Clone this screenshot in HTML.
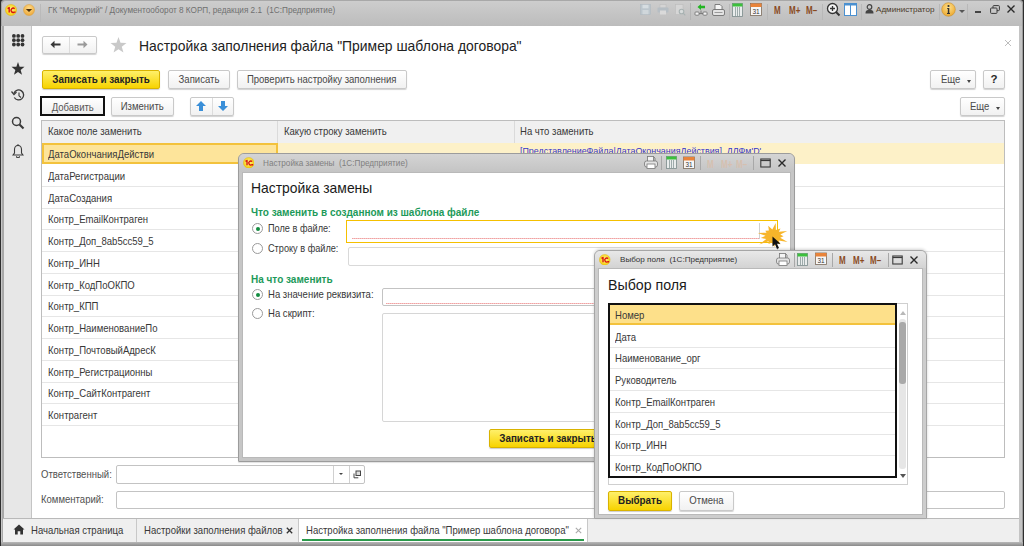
<!DOCTYPE html>
<html><head><meta charset="utf-8">
<style>
*{box-sizing:border-box;margin:0;padding:0}
html,body{width:1024px;height:546px;overflow:hidden;background:#4a4a4a;font-family:"Liberation Sans",sans-serif;color:#383838}
.a{position:absolute}
.t{position:absolute;white-space:nowrap;font-size:10.3px;line-height:14px;transform:scaleX(0.927);transform-origin:0 50%}
.btn{position:absolute;border:1px solid #c9c9c9;border-radius:2px;background:linear-gradient(#ffffff,#f1f1f1);box-shadow:0 1px 1px rgba(0,0,0,.18);font-size:9.6px;line-height:17px;text-align:center;color:#484848;white-space:nowrap}
.ybtn{position:absolute;border:1px solid #d9b300;border-radius:2px;background:linear-gradient(#fff06a,#f7d300);box-shadow:0 1px 1px rgba(0,0,0,.2);font-size:10px;font-weight:bold;line-height:17px;text-align:center;color:#222;white-space:nowrap}
.bt{display:inline-block;font-size:10.3px;transform:scaleX(0.927);transform-origin:50% 50%}
.ybtn .bt{font-size:10.3px;transform:scaleX(0.955)}
.inp{position:absolute;border:1px solid #c3c3c3;border-radius:2px;background:#fff}
.hl{position:absolute;height:1px;background:#e6e6e6}
.radio{position:absolute;width:11px;height:11px;border:1px solid #9a9a9a;border-radius:50%;background:#fff}
.radio.on::after{content:"";position:absolute;left:2.5px;top:2.5px;width:4px;height:4px;border-radius:50%;background:#128c40}
.green{position:absolute;white-space:nowrap;font-size:10px;font-weight:bold;color:#1d9a5a;line-height:12px}
</style></head>
<body>
<!-- outer window -->
<div class="a" style="left:0;top:0;width:1024px;height:546px;background:#2e2e2e"></div>
<div class="a" style="left:1px;top:0;width:1022px;height:546px;background:#a8a8a8;border-radius:3px 3px 0 0"></div>
<div class="a" style="left:1019px;top:4px;width:4px;height:542px;background:linear-gradient(90deg,#c4c4c4 0 3px,#9c9c9c 3px)"></div>
<!-- title bar -->
<div class="a" style="left:2px;top:1px;width:1020px;height:25px;background:linear-gradient(#cdcdcd,#bcbcbc);border-radius:4px 4px 0 0"></div>
<!-- sidebar -->
<div class="a" style="left:1px;top:26px;width:1px;height:516px;background:#c6c6c6"></div>
<div class="a" style="left:4px;top:26px;width:27px;height:492px;background:#e7e7e7"></div>
<div class="a" style="left:31px;top:26px;width:1px;height:492px;background:#c4c4c4"></div>
<!-- content -->
<div class="a" style="left:32px;top:26px;width:987px;height:492px;background:#fff"></div>
<div class="a" style="left:1019px;top:26px;width:3px;height:516px;background:#c4c4c4"></div>
<!-- tab bar -->
<div class="a" style="left:3px;top:518px;width:1016px;height:1px;background:#b9b9b9"></div>
<div class="a" style="left:3px;top:519px;width:1016px;height:23px;background:#efefef"></div>
<div class="a" style="left:1px;top:542px;width:1022px;height:4px;background:linear-gradient(#b8b8b8,#8a8a8a)"></div>
<!-- TITLE BAR CONTENT -->
<svg class="a" style="left:5px;top:3.5px" width="12" height="12" viewBox="0 0 12 12"><defs><radialGradient id="lgm" cx="50%" cy="45%" r="60%"><stop offset="0" stop-color="#fff68a"/><stop offset="1" stop-color="#f3c800"/></radialGradient></defs><circle cx="6" cy="6" r="5.6" fill="url(#lgm)" stroke="#e3b400" stroke-width="0.4"/><path d="M2.6 4.6L4.2 3.6V8.6" fill="none" stroke="#d81010" stroke-width="1.4" stroke-linejoin="round"/><path d="M9.6 4.8A2.1 2.1 0 1 0 9.2 8.1H10.6" fill="none" stroke="#d81010" stroke-width="1.4"/></svg>
<svg class="a" style="left:22.5px;top:3.5px" width="12" height="12" viewBox="0 0 12 12"><defs><radialGradient id="dd" cx="50%" cy="35%" r="65%"><stop offset="0" stop-color="#ffdc8a"/><stop offset="1" stop-color="#eda83a"/></radialGradient></defs><circle cx="6" cy="6" r="5.5" fill="url(#dd)" stroke="#d9a040" stroke-width="0.5"/><path d="M2.8 4.9H9.2L6 7.9Z" fill="#4a3010"/></svg>
<div class="a" style="left:40px;top:4px;width:1px;height:18px;background:#bababa"></div>
<div class="t" style="left:48px;top:5px;font-size:8.2px;line-height:11px;color:#707070;transform:none">ГК "Меркурий" / Документооборот 8 КОРП, редакция 2.1&nbsp; (1С:Предприятие)</div>
<svg class="a" style="left:640px;top:4px" width="11" height="11" viewBox="0 0 11 11"><rect x="0.5" y="0.5" width="10" height="10" fill="#bcc6cd" stroke="#b0bac0" stroke-width="0.6"/><rect x="2.5" y="0.8" width="6" height="3.5" fill="#d6dde1"/><rect x="2.5" y="6" width="6" height="4.2" fill="#d0d7db"/></svg>
<svg class="a" style="left:657px;top:4px" width="12" height="11" viewBox="0 0 12 11"><rect x="3" y="0.5" width="6" height="3.5" fill="#d4d4d4" stroke="#bcbcbc" stroke-width="0.5"/><rect x="0.5" y="3.5" width="11" height="5" rx="1" fill="#b6bec4"/><rect x="3" y="6.5" width="6" height="4" fill="#dadada"/></svg>
<svg class="a" style="left:675px;top:4px" width="11" height="12" viewBox="0 0 11 12"><rect x="0.5" y="0.5" width="7.5" height="10" fill="#d6d6d6" stroke="#bdbdbd" stroke-width="0.6"/><circle cx="6.5" cy="7.5" r="2.3" fill="#d8dcdc" stroke="#a8b2b2" stroke-width="1.1"/><path d="M8.2 9.2L10.3 11.3" stroke="#a8b2b2" stroke-width="1.2"/></svg>
<div class="a" style="left:690px;top:3px;width:1px;height:17px;background:#b4b4b4"></div>
<svg class="a" style="left:694px;top:3px" width="14" height="13" viewBox="0 0 14 13"><path d="M3.5 4L7 1V2.7H11V5.3H7V7Z" fill="#22b522"/><rect x="1" y="9" width="4" height="3.2" rx="0.8" fill="#f2f2f2" stroke="#6a6a6a" stroke-width="0.8"/><rect x="9" y="9" width="4" height="3.2" rx="0.8" fill="#f2f2f2" stroke="#6a6a6a" stroke-width="0.8"/><path d="M5 10.6H9M7 7.5V10.6" stroke="#6a6a6a" stroke-width="0.8"/></svg>
<svg class="a" style="left:712px;top:4px" width="13" height="12" viewBox="0 0 13 12"><path d="M3 0.5H8L10 2.5V6H3Z" fill="#f6f6f6" stroke="#666" stroke-width="0.8"/><rect x="0.5" y="5.5" width="12" height="6" rx="1.5" fill="#e4e4e4" stroke="#666" stroke-width="0.8"/><path d="M2.5 8.5H10.5" stroke="#888" stroke-width="0.8"/></svg>
<div class="a" style="left:729px;top:4px;width:1px;height:16px;background:#b8b8b8"></div>
<svg class="a" style="left:732px;top:3px" width="11" height="14" viewBox="0 0 11 14"><rect x="0.5" y="0.5" width="10" height="13" fill="#e9ecec" stroke="#7a8a8a" stroke-width="0.8"/><rect x="0.5" y="0.5" width="10" height="3" fill="#3cc03c"/><path d="M3.5 4V13M5.5 4V13M7.5 4V13" stroke="#8a9a9a" stroke-width="0.8"/></svg>
<svg class="a" style="left:750px;top:2px" width="12" height="14" viewBox="0 0 12 14"><rect x="0.5" y="1.5" width="11" height="12" fill="#f7f7f7" stroke="#7a6a5a" stroke-width="0.8"/><rect x="0.5" y="1.5" width="11" height="3.5" fill="#e9843a"/><text x="6" y="12" text-anchor="middle" font-family="Liberation Sans" font-size="6.5" fill="#333">31</text></svg>
<div class="a" style="left:767px;top:4px;width:1px;height:16px;background:#b8b8b8"></div>
<div class="t" style="left:773.9px;top:5px;font-size:10px;font-weight:bold;color:#8a4a1e;transform:scaleX(0.8);line-height:12px">M</div>
<div class="t" style="left:788.5px;top:5px;font-size:10px;font-weight:bold;color:#8a4a1e;transform:scaleX(0.8);line-height:12px">M+</div>
<div class="t" style="left:805.6px;top:5px;font-size:10px;font-weight:bold;color:#8a4a1e;transform:scaleX(0.8);line-height:12px">M−</div>
<div class="a" style="left:822px;top:4px;width:1px;height:16px;background:#b8b8b8"></div>
<svg class="a" style="left:826px;top:2px" width="15" height="15" viewBox="0 0 15 15"><circle cx="6.5" cy="6.5" r="5" fill="#f4f4f4" stroke="#333" stroke-width="1.3"/><path d="M4 6.5H9M6.5 4V9" stroke="#333" stroke-width="1.3"/><path d="M10 10L13.5 13.5" stroke="#333" stroke-width="2"/></svg>
<svg class="a" style="left:844px;top:3px" width="13" height="13" viewBox="0 0 13 13"><rect x="0.5" y="0.5" width="12" height="12" fill="#fff" stroke="#4a90d0" stroke-width="1"/><rect x="0.5" y="0.5" width="12" height="2" fill="#4a90d0"/><path d="M6.5 2V12.5" stroke="#4a90d0" stroke-width="1"/></svg>
<div class="a" style="left:861px;top:4px;width:1px;height:16px;background:#b8b8b8"></div>
<svg class="a" style="left:865px;top:4px" width="9" height="10" viewBox="0 0 9 10"><circle cx="4.5" cy="3" r="2.3" fill="none" stroke="#444" stroke-width="1.2"/><path d="M0.5 9.5C0.5 6.5 2 5.8 4.5 5.8S8.5 6.5 8.5 9.5Z" fill="#444"/></svg>
<div class="t" style="left:876px;top:4px;font-size:8.1px;line-height:11px;color:#4a3a2a;transform:none">Администратор</div>
<div class="a" style="left:939px;top:4px;width:1px;height:16px;background:#b8b8b8"></div>
<svg class="a" style="left:941px;top:2px" width="15" height="15" viewBox="0 0 15 15"><defs><radialGradient id="inf" cx="50%" cy="35%" r="65%"><stop offset="0" stop-color="#ffe08a"/><stop offset="1" stop-color="#eba830"/></radialGradient></defs><circle cx="7.5" cy="7.5" r="6.8" fill="url(#inf)" stroke="#c89030" stroke-width="0.6"/><circle cx="7.5" cy="4" r="1.1" fill="#333"/><path d="M6.2 6H8.3V11H9V12H6V11H6.8V7H6.2Z" fill="#333"/></svg>
<div class="a" style="left:959px;top:10px;width:0;height:0;border-left:3px solid transparent;border-right:3px solid transparent;border-top:3px solid #555"></div>
<div class="a" style="left:967px;top:4px;width:1px;height:16px;background:#b8b8b8"></div>
<div class="a" style="left:975px;top:11px;width:6px;height:1.5px;background:#444"></div>
<svg class="a" style="left:990px;top:5px" width="10" height="9" viewBox="0 0 10 9"><rect x="3" y="0.6" width="6.4" height="5" rx="0.8" fill="none" stroke="#3a3a3a" stroke-width="1"/><rect x="0.6" y="3" width="6.4" height="5.4" rx="0.8" fill="#c8c8c8" stroke="#3a3a3a" stroke-width="1"/></svg>
<svg class="a" style="left:1006px;top:4px" width="10" height="10" viewBox="0 0 10 10"><path d="M1.5 1.5L8.5 8.5M8.5 1.5L1.5 8.5" stroke="#2a2a2a" stroke-width="1.4"/></svg>

<!-- SIDEBAR ICONS -->
<svg class="a" style="left:11.5px;top:33.5px" width="13" height="13" viewBox="0 0 13 13"><circle cx="1.9" cy="1.9" r="1.9" fill="#333"/><circle cx="6.2" cy="1.9" r="1.9" fill="#333"/><circle cx="10.5" cy="1.9" r="1.9" fill="#333"/><circle cx="1.9" cy="6.2" r="1.9" fill="#333"/><circle cx="6.2" cy="6.2" r="1.9" fill="#333"/><circle cx="10.5" cy="6.2" r="1.9" fill="#333"/><circle cx="1.9" cy="10.5" r="1.9" fill="#333"/><circle cx="6.2" cy="10.5" r="1.9" fill="#333"/><circle cx="10.5" cy="10.5" r="1.9" fill="#333"/></svg>
<svg class="a" style="left:11px;top:62px" width="14" height="13" viewBox="0 0 24 23"><path d="M12 0L14.9 8.3L23.5 8.6L16.7 14L19.1 22.4L12 17.5L4.9 22.4L7.3 14L0.5 8.6L9.1 8.3Z" fill="#333"/></svg>
<svg class="a" style="left:11px;top:89px" width="14" height="13" viewBox="0 0 14 13"><path d="M3.3 8.5A5 5 0 1 0 3 4" fill="none" stroke="#3a3a3a" stroke-width="1.3"/><path d="M0.5 2.5L3 5.5L5.5 3" fill="none" stroke="#3a3a3a" stroke-width="1.2"/><path d="M8 3.5V6.8L10 8.5" fill="none" stroke="#3a3a3a" stroke-width="1.1"/></svg>
<svg class="a" style="left:11px;top:116px" width="14" height="14" viewBox="0 0 14 14"><circle cx="5.5" cy="5.5" r="4" fill="none" stroke="#3a3a3a" stroke-width="1.5"/><path d="M8.5 8.5L12.5 12.5" stroke="#3a3a3a" stroke-width="2.2"/></svg>
<svg class="a" style="left:12px;top:144px" width="12" height="14" viewBox="0 0 12 14"><path d="M6 1.5C3.5 1.5 2.5 3.5 2.5 5.5V9L1 11H11L9.5 9V5.5C9.5 3.5 8.5 1.5 6 1.5Z" fill="none" stroke="#3a3a3a" stroke-width="1.1"/><path d="M4.5 12.3A1.5 1.5 0 0 0 7.5 12.3" fill="none" stroke="#3a3a3a" stroke-width="1.1"/><circle cx="6" cy="1" r="0.8" fill="#333"/></svg>

<!-- MAIN FORM -->
<div class="btn" style="left:42px;top:36px;width:55px;height:18px"></div>
<div class="a" style="left:69px;top:37px;width:1px;height:16px;background:#dcdcdc"></div>
<svg class="a" style="left:50px;top:40px" width="11" height="9" viewBox="0 0 11 9"><path d="M0.5 4.5L4.5 0.8V3.4H10.5V5.6H4.5V8.2Z" fill="#383838"/></svg>
<svg class="a" style="left:77px;top:40px" width="11" height="9" viewBox="0 0 11 9"><path d="M10.5 4.5L6.5 0.8V3.4H0.5V5.6H6.5V8.2Z" fill="#9a9a9a"/></svg>
<svg class="a" style="left:110px;top:37px" width="17" height="16" viewBox="0 0 24 23"><path d="M12 0L14.9 8.3L23.5 8.6L16.7 14L19.1 22.4L12 17.5L4.9 22.4L7.3 14L0.5 8.6L9.1 8.3Z" fill="#c9c9c9"/></svg>
<div class="t" style="left:139px;top:37px;font-size:13.9px;line-height:18px;color:#222;transform:none">Настройка заполнения файла "Пример шаблона договора"</div>
<svg class="a" style="left:1003.5px;top:38.5px" width="8" height="8" viewBox="0 0 8 8"><path d="M1 1L7 7M7 1L1 7" stroke="#bdbdbd" stroke-width="1"/></svg>
<div class="ybtn" style="left:42px;top:70px;width:118px;height:19px"><span class="bt">Записать и закрыть</span></div>
<div class="btn" style="left:168px;top:70px;width:62px;height:19px"><span class="bt">Записать</span></div>
<div class="btn" style="left:237px;top:70px;width:170px;height:19px"><span class="bt">Проверить настройку заполнения</span></div>
<div class="btn" style="left:930px;top:70px;width:46px;height:19px"></div><div class="t" style="left:941px;top:73px;color:#4a4a4a">Еще</div><div class="a" style="left:967px;top:80px;width:0;height:0;border-left:2.5px solid transparent;border-right:2.5px solid transparent;border-top:3px solid #444"></div>
<div class="btn" style="left:983px;top:70px;width:22px;height:19px;font-weight:bold;font-size:11.5px;color:#2a2a2a">?</div>
<div class="a" style="left:40px;top:96px;width:65px;height:20px;border:2px solid #111"></div>
<div class="a" style="left:42px;top:98px;width:61px;height:16px;background:linear-gradient(#ffffff,#eeeeee)"></div><div class="a" style="left:42px;top:98px;width:61px;height:16px;line-height:16px;text-align:center;color:#555"><span class="bt">Добавить</span></div>
<div class="btn" style="left:111px;top:97px;width:63px;height:19px"><span class="bt">Изменить</span></div>
<div class="btn" style="left:190px;top:97px;width:44px;height:19px"></div>
<div class="a" style="left:212px;top:98px;width:1px;height:17px;background:#dcdcdc"></div>
<svg class="a" style="left:195px;top:100px" width="12" height="12" viewBox="0 0 12 12"><path d="M6 1L11 6H8V11H4V6H1Z" fill="#3a8fd8"/></svg>
<svg class="a" style="left:217px;top:100px" width="12" height="12" viewBox="0 0 12 12"><path d="M6 11L11 6H8V1H4V6H1Z" fill="#3a8fd8"/></svg>
<div class="btn" style="left:960px;top:97px;width:45px;height:19px"></div><div class="t" style="left:970px;top:100px;color:#4a4a4a">Еще</div><div class="a" style="left:996px;top:107px;width:0;height:0;border-left:2.5px solid transparent;border-right:2.5px solid transparent;border-top:3px solid #444"></div>
<div class="a" style="left:41px;top:120px;width:964px;height:338px;border:1px solid #bdbdbd;background:#fff"></div>
<div class="a" style="left:42px;top:121px;width:962px;height:22px;background:#f0f0f0"></div>
<div class="a" style="left:277px;top:121px;width:1px;height:22px;background:#dadada"></div>
<div class="a" style="left:514px;top:121px;width:1px;height:22px;background:#dadada"></div>
<div class="t" style="left:48px;top:125px">Какое поле заменить</div>
<div class="t" style="left:284px;top:125px">Какую строку заменить</div>
<div class="t" style="left:520px;top:125px">На что заменить</div>
<div class="a" style="left:42px;top:143px;width:962px;height:21px;background:#fdf1c8"></div>
<div class="a" style="left:42px;top:143px;width:236px;height:21px;background:#fde49a;border:2px solid #f3c23c"></div>
<div class="t" style="left:520px;top:144px;color:#3636c8;font-size:9.6px">[ПредставлениеФайла|ДатаОкончанияДействия], ДЛФм'D'</div>
<div class="t" style="left:48px;top:148.0px">ДатаОкончанияДействи</div>
<div class="t" style="left:48px;top:169.8px">ДатаРегистрации</div>
<div class="hl" style="left:42px;top:185.8px;width:962px"></div>
<div class="t" style="left:48px;top:191.5px">ДатаСоздания</div>
<div class="hl" style="left:42px;top:207.5px;width:962px"></div>
<div class="t" style="left:48px;top:213.2px">Контр_EmailКонтраген</div>
<div class="hl" style="left:42px;top:229.2px;width:962px"></div>
<div class="t" style="left:48px;top:235.0px">Контр_Доп_8ab5cc59_5</div>
<div class="hl" style="left:42px;top:251.0px;width:962px"></div>
<div class="t" style="left:48px;top:256.8px">Контр_ИНН</div>
<div class="hl" style="left:42px;top:272.8px;width:962px"></div>
<div class="t" style="left:48px;top:278.5px">Контр_КодПоОКПО</div>
<div class="hl" style="left:42px;top:294.5px;width:962px"></div>
<div class="t" style="left:48px;top:300.2px">Контр_КПП</div>
<div class="hl" style="left:42px;top:316.2px;width:962px"></div>
<div class="t" style="left:48px;top:322.0px">Контр_НаименованиеПо</div>
<div class="hl" style="left:42px;top:338.0px;width:962px"></div>
<div class="t" style="left:48px;top:343.8px">Контр_ПочтовыйАдресК</div>
<div class="hl" style="left:42px;top:359.8px;width:962px"></div>
<div class="t" style="left:48px;top:365.5px">Контр_Регистрационны</div>
<div class="hl" style="left:42px;top:381.5px;width:962px"></div>
<div class="t" style="left:48px;top:387.2px">Контр_СайтКонтрагент</div>
<div class="hl" style="left:42px;top:403.2px;width:962px"></div>
<div class="t" style="left:48px;top:409.0px">Контрагент</div>
<div class="hl" style="left:42px;top:425.0px;width:962px"></div>
<div class="t" style="left:41px;top:468px;color:#505050">Ответственный:</div>
<div class="inp" style="left:116px;top:465px;width:249px;height:19px"></div>
<div class="a" style="left:333px;top:466px;width:1px;height:17px;background:#d0d0d0"></div>
<div class="a" style="left:348.5px;top:466px;width:1px;height:17px;background:#d0d0d0"></div>
<div class="a" style="left:338.5px;top:473px;width:0;height:0;border-left:2.5px solid transparent;border-right:2.5px solid transparent;border-top:2.5px solid #444"></div>
<svg class="a" style="left:353px;top:470px" width="9" height="9" viewBox="0 0 9 9"><path d="M1 3.5V7.8H5.3" fill="none" stroke="#444" stroke-width="1"/><rect x="3" y="1" width="4.5" height="4.5" fill="#ddd" stroke="#444" stroke-width="1"/></svg>
<div class="t" style="left:41px;top:493px;color:#505050">Комментарий:</div>
<div class="inp" style="left:116px;top:491px;width:889px;height:18px"></div>

<!-- TAB BAR -->
<svg class="a" style="left:13px;top:524px" width="12" height="11" viewBox="0 0 12 11"><path d="M6 0.5L11.5 5.5H10V10.5H7.3V7.3H4.7V10.5H2V5.5H0.5Z" fill="#333"/></svg>
<div class="t" style="left:31px;top:524px;font-size:10.3px">Начальная страница</div>
<div class="a" style="left:136px;top:519px;width:1px;height:23px;background:#c8c8c8"></div>
<div class="t" style="left:144px;top:524px;font-size:10.3px">Настройки заполнения файлов</div>
<svg class="a" style="left:286px;top:527px" width="7" height="7" viewBox="0 0 7 7"><path d="M0.8 0.8L6.2 6.2M6.2 0.8L0.8 6.2" stroke="#333" stroke-width="1.3"/></svg>
<div class="a" style="left:298px;top:519px;width:1px;height:23px;background:#c8c8c8"></div>
<div class="a" style="left:299px;top:519px;width:288px;height:23px;background:#fff"></div>
<div class="t" style="left:306px;top:524px;font-size:10.3px">Настройка заполнения файла "Пример шаблона договора"</div>
<svg class="a" style="left:575px;top:527px" width="7" height="7" viewBox="0 0 7 7"><path d="M0.8 0.8L6.2 6.2M6.2 0.8L0.8 6.2" stroke="#aaa" stroke-width="1.1"/></svg>
<div class="a" style="left:302px;top:539px;width:282px;height:2px;background:#2a9a4a"></div>
<div class="a" style="left:587px;top:519px;width:1px;height:23px;background:#c8c8c8"></div>

<!-- DIALOG 1 -->
<div class="a" style="left:238px;top:153px;width:557px;height:309px;border:1px solid #9c9c9c;border-radius:6px 6px 1px 1px;background:#c6c6c6;box-shadow:0 1px 1px rgba(0,0,0,.12)"></div>
<div class="a" style="left:239px;top:154px;width:555px;height:18px;border-radius:5px 5px 0 0;background:linear-gradient(#d4d4d4,#c4c4c4)"></div>
<div class="a" style="left:242px;top:172px;width:549px;height:286px;background:#fff;border:1px solid #b9b9b9"></div>
<svg class="a" style="left:242.75px;top:156.75px" width="11.5" height="11.5" viewBox="0 0 12 12"><defs><radialGradient id="lgd1" cx="50%" cy="45%" r="60%"><stop offset="0" stop-color="#fff68a"/><stop offset="1" stop-color="#f3c800"/></radialGradient></defs><circle cx="6" cy="6" r="5.6" fill="url(#lgd1)" stroke="#e3b400" stroke-width="0.4"/><path d="M2.6 4.6L4.2 3.6V8.6" fill="none" stroke="#d81010" stroke-width="1.4" stroke-linejoin="round"/><path d="M9.6 4.8A2.1 2.1 0 1 0 9.2 8.1H10.6" fill="none" stroke="#d81010" stroke-width="1.4"/></svg>
<div class="t" style="left:263px;top:158px;font-size:8.2px;line-height:11px;color:#808080;transform:none">Настройка замены&nbsp; (1С:Предприятие)</div>
<svg class="a" style="left:644px;top:156px" width="14" height="13" viewBox="0 0 14 13"><rect x="3.5" y="0.5" width="6" height="5" fill="#f4f4f4" stroke="#777" stroke-width="0.8"/><path d="M9.5 0.5L11 2V5" fill="none" stroke="#777" stroke-width="0.8"/><rect x="0.5" y="5" width="13" height="6" rx="2" fill="#e4e4e4" stroke="#777" stroke-width="0.8"/><rect x="3" y="8" width="8" height="4.5" fill="#fff" stroke="#777" stroke-width="0.8"/></svg>
<div class="a" style="left:661px;top:156px;width:1px;height:14px;background:#a8a8a8"></div>
<svg class="a" style="left:666px;top:156px" width="11" height="13" viewBox="0 0 11 13"><rect x="0.5" y="0.5" width="10" height="12" fill="#e9ecec" stroke="#7a8a8a" stroke-width="0.8"/><rect x="0.5" y="0.5" width="10" height="3" fill="#3cc03c"/><path d="M3.5 4V12M5.5 4V12M7.5 4V12" stroke="#8a9a9a" stroke-width="0.8"/></svg>
<svg class="a" style="left:683px;top:156px" width="12" height="13" viewBox="0 0 12 13"><rect x="0.5" y="1" width="11" height="11.5" fill="#f7f7f7" stroke="#7a6a5a" stroke-width="0.8"/><rect x="0.5" y="1" width="11" height="3.5" fill="#e9843a"/><text x="6" y="11.3" text-anchor="middle" font-family="Liberation Sans" font-size="6.3" fill="#333">31</text></svg>
<div class="a" style="left:700px;top:156px;width:1px;height:14px;background:#a8a8a8"></div>
<div class="t" style="left:706.5px;top:158.5px;font-size:10px;font-weight:bold;color:#d6c0b0;transform:scaleX(0.8);line-height:12px">M</div>
<div class="t" style="left:721px;top:158.5px;font-size:10px;font-weight:bold;color:#d6c0b0;transform:scaleX(0.8);line-height:12px">M+</div>
<div class="t" style="left:735.5px;top:158.5px;font-size:10px;font-weight:bold;color:#d6c0b0;transform:scaleX(0.8);line-height:12px">M−</div>
<div class="a" style="left:753px;top:156px;width:1px;height:14px;background:#a8a8a8"></div>
<svg class="a" style="left:760px;top:158px" width="11" height="10" viewBox="0 0 11 10"><rect x="0.8" y="1" width="9.4" height="8" fill="none" stroke="#3a3a3a" stroke-width="1.1"/><path d="M0.8 2.5H10.2" stroke="#3a3a3a" stroke-width="1.2"/></svg>
<svg class="a" style="left:777px;top:158px" width="10" height="10" viewBox="0 0 10 10"><path d="M1.5 1.5L8.5 8.5M8.5 1.5L1.5 8.5" stroke="#2a2a2a" stroke-width="1.4"/></svg>
<div class="t" style="left:251px;top:180px;font-size:13.9px;line-height:17px;color:#1a1a1a;transform:none">Настройка замены</div>
<div class="green" style="left:251px;top:207px">Что заменить в созданном из шаблона файле</div>
<div class="radio on" style="left:252px;top:223px"></div>
<div class="t" style="left:268px;top:222px;font-size:10.3px;transform:scaleX(0.89)">Поле в файле:</div>
<div class="a" style="left:346px;top:220px;width:432px;height:22.5px;border:1.6px solid #f5c000;background:#fff"></div>
<div class="a" style="left:352px;top:238px;width:408px;height:1px;background:repeating-linear-gradient(90deg,#f0a2a2 0 1px,#f6c4c4 1px 2px)"></div>
<div class="a" style="left:759px;top:223px;width:1px;height:16px;background:#d0d0d0"></div>
<div class="radio" style="left:252px;top:243px"></div>
<div class="t" style="left:268px;top:242px;font-size:10.3px;transform:scaleX(0.89)">Строку в файле:</div>
<div class="inp" style="left:348px;top:247px;width:430px;height:19px;border-color:#d9d9d9"></div>
<div class="green" style="left:251px;top:274px">На что заменить</div>
<div class="radio on" style="left:252px;top:289px"></div>
<div class="t" style="left:268px;top:288px;font-size:10.3px">На значение реквизита:</div>
<div class="inp" style="left:382px;top:288px;width:396px;height:18px"></div>
<div class="a" style="left:386px;top:303px;width:380px;height:0;height:1px;background:repeating-linear-gradient(90deg,#f0a2a2 0 1px,#f6c4c4 1px 2px)"></div>
<div class="radio" style="left:252px;top:308px"></div>
<div class="t" style="left:268px;top:307px;font-size:10.3px">На скрипт:</div>
<div class="inp" style="left:382px;top:313px;width:396px;height:109px;border-color:#d6d6d6"></div>
<div class="ybtn" style="left:489px;top:429px;width:118px;height:19px"><span class="bt">Записать и закрыть</span></div>
<div class="a" style="left:594px;top:250px;width:333px;height:269px;border:1px solid #a6a6a6;border-radius:6px 6px 1px 1px;background:#cdcdcd;box-shadow:0 -1px 3px rgba(0,0,0,.18)"></div>
<div class="a" style="left:595px;top:251px;width:331px;height:17px;border-radius:5px 5px 0 0;background:linear-gradient(#e8e8e8,#d3d3d3)"></div>
<div class="a" style="left:598px;top:268px;width:325px;height:247px;background:#fff;border:1px solid #b9b9b9"></div>
<svg class="a" style="left:599.25px;top:253.75px" width="11.5" height="11.5" viewBox="0 0 12 12"><defs><radialGradient id="lgd2" cx="50%" cy="45%" r="60%"><stop offset="0" stop-color="#fff68a"/><stop offset="1" stop-color="#f3c800"/></radialGradient></defs><circle cx="6" cy="6" r="5.6" fill="url(#lgd2)" stroke="#e3b400" stroke-width="0.4"/><path d="M2.6 4.6L4.2 3.6V8.6" fill="none" stroke="#d81010" stroke-width="1.4" stroke-linejoin="round"/><path d="M9.6 4.8A2.1 2.1 0 1 0 9.2 8.1H10.6" fill="none" stroke="#d81010" stroke-width="1.4"/></svg>
<div class="t" style="left:620px;top:254px;font-size:8.1px;line-height:11px;color:#333;transform:none">Выбор поля&nbsp; (1С:Предприятие)</div>
<svg class="a" style="left:776px;top:253px" width="14" height="13" viewBox="0 0 14 13"><rect x="3.5" y="0.5" width="6" height="5" fill="#f4f4f4" stroke="#777" stroke-width="0.8"/><path d="M9.5 0.5L11 2V5" fill="none" stroke="#777" stroke-width="0.8"/><rect x="0.5" y="5" width="13" height="6" rx="2" fill="#e4e4e4" stroke="#777" stroke-width="0.8"/><rect x="3" y="8" width="8" height="4.5" fill="#fff" stroke="#777" stroke-width="0.8"/></svg>
<div class="a" style="left:794px;top:253px;width:1px;height:14px;background:#a8a8a8"></div>
<svg class="a" style="left:797px;top:253px" width="11" height="13" viewBox="0 0 11 13"><rect x="0.5" y="0.5" width="10" height="12" fill="#e9ecec" stroke="#7a8a8a" stroke-width="0.8"/><rect x="0.5" y="0.5" width="10" height="3" fill="#3cc03c"/><path d="M3.5 4V12M5.5 4V12M7.5 4V12" stroke="#8a9a9a" stroke-width="0.8"/></svg>
<svg class="a" style="left:815px;top:252px" width="12" height="13" viewBox="0 0 12 13"><rect x="0.5" y="1" width="11" height="11.5" fill="#f7f7f7" stroke="#7a6a5a" stroke-width="0.8"/><rect x="0.5" y="1" width="11" height="3.5" fill="#e9843a"/><text x="6" y="11.3" text-anchor="middle" font-family="Liberation Sans" font-size="6.3" fill="#333">31</text></svg>
<div class="a" style="left:832px;top:253px;width:1px;height:14px;background:#a8a8a8"></div>
<div class="t" style="left:838.8px;top:255px;font-size:10px;font-weight:bold;color:#8a4a1e;transform:scaleX(0.8);line-height:12px">M</div>
<div class="t" style="left:852.8px;top:255px;font-size:10px;font-weight:bold;color:#8a4a1e;transform:scaleX(0.8);line-height:12px">M+</div>
<div class="t" style="left:869.8px;top:255px;font-size:10px;font-weight:bold;color:#8a4a1e;transform:scaleX(0.8);line-height:12px">M−</div>
<div class="a" style="left:888px;top:253px;width:1px;height:14px;background:#a8a8a8"></div>
<svg class="a" style="left:892px;top:255px" width="11" height="10" viewBox="0 0 11 10"><rect x="0.8" y="1" width="9.4" height="8" fill="none" stroke="#3a3a3a" stroke-width="1.1"/><path d="M0.8 2.5H10.2" stroke="#3a3a3a" stroke-width="1.2"/></svg>
<svg class="a" style="left:909px;top:255px" width="10" height="10" viewBox="0 0 10 10"><path d="M1.5 1.5L8.5 8.5M8.5 1.5L1.5 8.5" stroke="#2a2a2a" stroke-width="1.4"/></svg>
<div class="t" style="left:608px;top:276.5px;font-size:14.2px;line-height:17px;color:#1a1a1a;transform:none">Выбор поля</div>
<div class="a" style="left:608px;top:303px;width:300px;height:182px;border:1px solid #cfcfcf;background:#fff"></div>
<div class="a" style="left:610px;top:305px;width:286px;height:20px;background:#fde08a;border-bottom:2px solid #f3c23c"></div>
<div class="t" style="left:615px;top:309.0px;font-size:10.3px">Номер</div>
<div class="t" style="left:615px;top:330.7px;font-size:10.3px">Дата</div>
<div class="hl" style="left:610px;top:346.7px;width:286px"></div>
<div class="t" style="left:615px;top:352.4px;font-size:10.3px">Наименование_орг</div>
<div class="hl" style="left:610px;top:368.4px;width:286px"></div>
<div class="t" style="left:615px;top:374.1px;font-size:10.3px">Руководитель</div>
<div class="hl" style="left:610px;top:390.1px;width:286px"></div>
<div class="t" style="left:615px;top:395.8px;font-size:10.3px">Контр_EmailКонтраген</div>
<div class="hl" style="left:610px;top:411.8px;width:286px"></div>
<div class="t" style="left:615px;top:417.5px;font-size:10.3px">Контр_Доп_8ab5cc59_5</div>
<div class="hl" style="left:610px;top:433.5px;width:286px"></div>
<div class="t" style="left:615px;top:439.2px;font-size:10.3px">Контр_ИНН</div>
<div class="hl" style="left:610px;top:455.2px;width:286px"></div>
<div class="t" style="left:615px;top:460.9px;font-size:10.3px">Контр_КодПоОКПО</div>
<div class="hl" style="left:610px;top:476.9px;width:286px"></div>
<div class="a" style="left:608px;top:303px;width:289px;height:175px;border:2px solid #111"></div>
<div class="a" style="left:900px;top:311px;width:0;height:0;border-left:3px solid transparent;border-right:3px solid transparent;border-bottom:4px solid #b8b8b8"></div>
<div class="a" style="left:899px;top:319px;width:7px;height:150px;background:#e6e6e6;border-radius:3px"></div>
<div class="a" style="left:899px;top:322px;width:7px;height:62px;background:#a9a9a9;border-radius:3px"></div>
<div class="a" style="left:900px;top:474px;width:0;height:0;border-left:3px solid transparent;border-right:3px solid transparent;border-top:4px solid #555"></div>
<div class="ybtn" style="left:608px;top:491px;width:64px;height:20px;line-height:18px"><span class="bt">Выбрать</span></div>
<div class="btn" style="left:679px;top:491px;width:55px;height:20px;line-height:18px"><span class="bt">Отмена</span></div>
<svg class="a" style="left:753px;top:221px" width="40" height="30" viewBox="0 0 40 30"><polygon points="22.7,1.9 22.9,9.0 27.5,7.5 25.8,10.8 34.2,9.9 27.3,13.6 30.5,15.2 27.2,16.7 34.6,21.1 25.5,19.5 27.4,23.5 22.5,21.1 21.3,25.9 18.9,21.4 15.6,22.9 15.6,20.2 6.3,23.5 13.3,17.9 7.7,17.0 12.5,14.8 4.8,11.9 13.5,11.8 12.3,9.7 15.9,9.5 15.2,4.7 19.3,8.5" fill="#f7b52a"/></svg>
<svg class="a" style="left:772px;top:236px" width="9" height="14" viewBox="0 0 9 14"><path d="M0.5 0.5V10.5L3 8.3L5 13L7 12L5 7.8H8.5Z" fill="#111"/></svg>

</body></html>
